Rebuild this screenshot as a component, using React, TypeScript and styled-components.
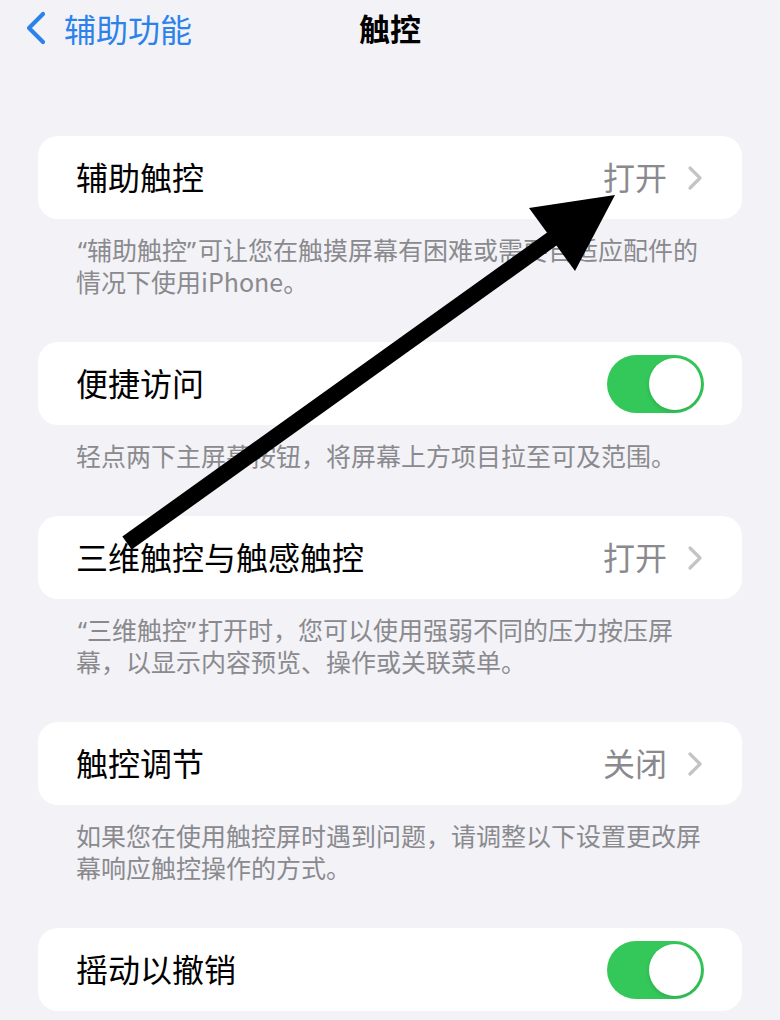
import React from "react";
import styled, { createGlobalStyle } from "styled-components";

const Global = createGlobalStyle`
  html, body {
    margin: 0;
    padding: 0;
    background: #f2f2f7;
  }
  body {
    font-family: "Noto Sans CJK SC", "Noto Sans", sans-serif;
    -webkit-font-smoothing: antialiased;
  }
`;

const Page = styled.div`
  position: relative;
  width: 780px;
  height: 1020px;
  background: #f2f2f7;
  overflow: hidden;
`;

const Nav = styled.div`
  display: grid;
  grid-template-columns: 1fr auto 1fr;
  align-items: center;
  height: 56px;
  padding: 0 25px;
`;

const Back = styled.div`
  display: flex;
  align-items: center;
  gap: 17px;
  color: #2b82ea;
  font-size: 32px;
  line-height: 40px;
`;

const Title = styled.div`
  font-size: 31px;
  font-weight: 700;
  color: #000;
  line-height: 40px;
`;

const Content = styled.div`
  display: flex;
  flex-direction: column;
  padding: 80px 38px 0;
`;

const Section = styled.section`
  display: flex;
  flex-direction: column;
  margin-bottom: 45px;
`;

const Card = styled.div`
  background: #fff;
  border-radius: 20px;
  height: 83px;
  display: flex;
  align-items: center;
  justify-content: space-between;
  padding: 0 38px;
`;

const Label = styled.div`
  font-size: 32px;
  color: #000;
  line-height: 40px;
  margin-top: -3px;
`;

const Accessory = styled.div`
  display: flex;
  align-items: center;
  gap: 20px;
  padding-right: 1px;
`;

const Value = styled.div`
  font-size: 32px;
  color: #8a8a8e;
  line-height: 40px;
  margin-top: -3px;
`;

const Footer = styled.div`
  padding: 14px 0 0 38px;
  font-size: 25px;
  line-height: 32px;
  color: #8a8a8e;
  white-space: nowrap;
`;

const Quote = styled.span<{ $open?: boolean }>`
  font-family: "Noto Sans", sans-serif;
  line-height: 1;
  padding: ${(p) => (p.$open ? "0 0 0 2px" : "0 2px 0 0")};
`;

const Toggle = styled.div<{ $on: boolean }>`
  position: relative;
  width: 97px;
  height: 58px;
  border-radius: 29px;
  background: ${(p) => (p.$on ? "#34c759" : "#e9e9ea")};
`;

const Knob = styled.div<{ $on: boolean }>`
  position: absolute;
  top: 3px;
  left: ${(p) => (p.$on ? "42px" : "3px")};
  width: 52px;
  height: 52px;
  border-radius: 50%;
  background: #fff;
  box-shadow: 0 2px 4px rgba(0, 0, 0, 0.12);
`;

const Overlay = styled.svg`
  position: absolute;
  left: 0;
  top: 0;
  width: 780px;
  height: 1020px;
  pointer-events: none;
`;

const Chevron = () => (
  <svg width="16" height="26" viewBox="0 0 16 26">
    <path d="M3 3 L13 13 L3 23" fill="none" stroke="#c4c4c7" strokeWidth="3.2" strokeLinecap="round" strokeLinejoin="round" />
  </svg>
);

const BackChevron = () => (
  <svg width="22" height="34" viewBox="0 0 22 34">
    <path d="M18 3 L4 17 L18 31" fill="none" stroke="#2b82ea" strokeWidth="4.2" strokeLinecap="round" strokeLinejoin="round" />
  </svg>
);

type Item =
  | { label: string; kind: "link"; value: string; footer?: React.ReactNode }
  | { label: string; kind: "toggle"; on: boolean; footer?: React.ReactNode };

const items: Item[] = [
  {
    label: "辅助触控",
    kind: "link",
    value: "打开",
    footer: (
      <>
        <Quote $open>“</Quote>辅助触控<Quote>”</Quote>可让您在触摸屏幕有困难或需要自适应配件的
        <br />
        情况下使用iPhone。
      </>
    ),
  },
  {
    label: "便捷访问",
    kind: "toggle",
    on: true,
    footer: <>轻点两下主屏幕按钮，将屏幕上方项目拉至可及范围。</>,
  },
  {
    label: "三维触控与触感触控",
    kind: "link",
    value: "打开",
    footer: (
      <>
        <Quote $open>“</Quote>三维触控<Quote>”</Quote>打开时，您可以使用强弱不同的压力按压屏
        <br />
        幕，以显示内容预览、操作或关联菜单。
      </>
    ),
  },
  {
    label: "触控调节",
    kind: "link",
    value: "关闭",
    footer: (
      <>
        如果您在使用触控屏时遇到问题，请调整以下设置更改屏
        <br />
        幕响应触控操作的方式。
      </>
    ),
  },
  { label: "摇动以撤销", kind: "toggle", on: true },
];

export default function App() {
  return (
    <Page>
      <Global />
      <Nav>
        <Back>
          <BackChevron />
          <span>辅助功能</span>
        </Back>
        <Title>触控</Title>
        <div />
      </Nav>
      <Content>
        {items.map((it) => (
          <Section key={it.label}>
            <Card>
              <Label>{it.label}</Label>
              {it.kind === "link" ? (
                <Accessory>
                  <Value>{it.value}</Value>
                  <Chevron />
                </Accessory>
              ) : (
                <Toggle $on={it.on}>
                  <Knob $on={it.on} />
                </Toggle>
              )}
            </Card>
            {it.footer && <Footer>{it.footer}</Footer>}
          </Section>
        ))}
      </Content>
      <Overlay viewBox="0 0 780 1020">
        <line x1="127" y1="543" x2="556" y2="236" stroke="#000" strokeWidth="16" strokeLinecap="butt" />
        <polygon points="615,195 529,208 575,271" fill="#000" />
      </Overlay>
    </Page>
  );
}
